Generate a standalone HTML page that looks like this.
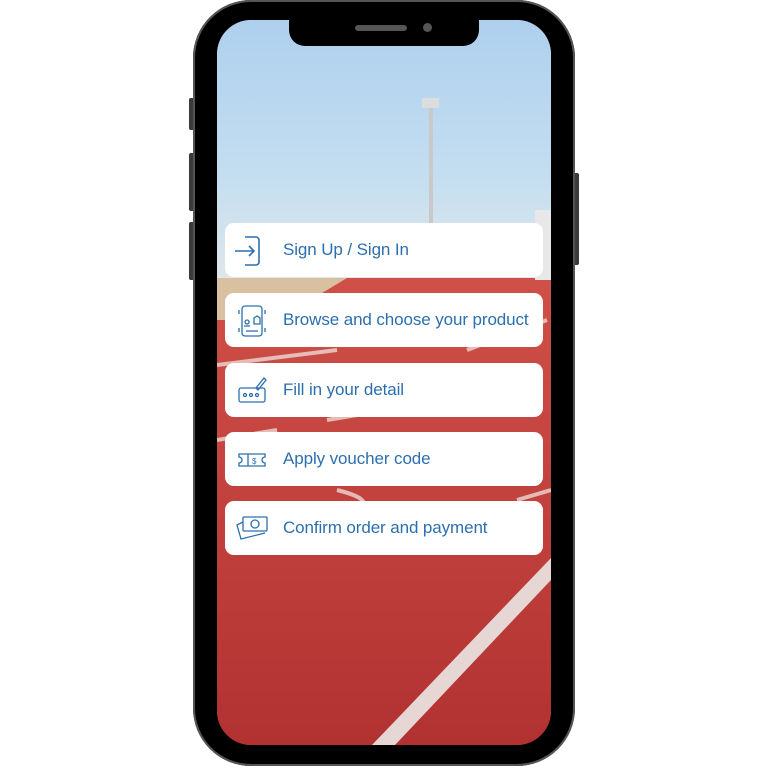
<!DOCTYPE html>
<html><head><style>
html,body{margin:0;padding:0;background:#fff;width:768px;height:768px;overflow:hidden;position:relative;font-family:"Liberation Sans",sans-serif}
.btn{position:absolute;background:#3a3a3a;border-radius:2px}
.body{position:absolute;left:193px;top:0;width:382px;height:766px;background:#000;border-radius:58px;box-shadow:0 0 0 2px #555 inset}
.screen{position:absolute;left:217px;top:20px;width:334px;height:725px;border-radius:34px;overflow:hidden;background:#b83b36}
.notch{position:absolute;left:289px;top:18px;width:190px;height:28px;background:#000;border-radius:0 0 16px 16px}
.card{position:absolute;left:225px;width:318px;height:54px;background:#fff;border-radius:9px;color:#2c6fae;font-size:17px;line-height:54px}
.card span{position:absolute;left:58px;top:0;white-space:nowrap;letter-spacing:-0.1px}
.card svg{position:absolute;left:10px;top:11px}
</style></head><body>
<div class="btn" style="left:189px;top:98px;width:6px;height:32px"></div>
<div class="btn" style="left:189px;top:153px;width:6px;height:58px"></div>
<div class="btn" style="left:189px;top:222px;width:6px;height:58px"></div>
<div class="btn" style="left:573px;top:173px;width:6px;height:92px"></div>
<div class="body"></div>
<div class="screen">
<svg width="334" height="725" style="position:absolute;left:0;top:0">
<defs><linearGradient id="sky" x1="0" y1="0" x2="0" y2="1"><stop offset="0" stop-color="#aed0ee"/><stop offset="0.6" stop-color="#c4def0"/><stop offset="1" stop-color="#dfe7ea"/></linearGradient>
<linearGradient id="red" x1="0" y1="0" x2="0" y2="1"><stop offset="0" stop-color="#cf5048"/><stop offset="1" stop-color="#b23232"/></linearGradient></defs>
<rect width="334" height="262" fill="url(#sky)"/>
<rect y="258" width="334" height="467" fill="url(#red)"/>
<polygon points="0,258 130,258 60,300 0,300" fill="#d8c0a0"/>
<rect x="212" y="85" width="4" height="120" fill="#c9c9c9"/>
<rect x="205" y="78" width="17" height="10" fill="#ddd"/>
<rect x="318" y="190" width="16" height="70" fill="#e8e8e8"/>
<polygon points="334,538 334,560 178,725 155,725" fill="#e6d6d4"/>
<path d="M0,345 L120,330 M110,400 L200,385 M0,420 L60,410 M250,330 L330,300 M300,480 L334,470 M120,470 Q160,480 140,490" stroke="#eed8d4" stroke-width="4" fill="none" opacity="0.8"/>
</svg>
</div>
<div class="notch"><div style="position:absolute;left:66px;top:7px;width:52px;height:6px;border-radius:3px;background:#555"></div><div style="position:absolute;left:134px;top:5px;width:9px;height:9px;border-radius:5px;background:#555"></div></div>

<div class="card" style="top:223px"><svg width="34" height="34" fill="none" stroke="#2c6fae" stroke-width="1.6"><path d="M10 3h11a3 3 0 0 1 3 3v22a3 3 0 0 1-3 3H10M0 17h19M14 12l5 5-5 5"/></svg><span>Sign Up / Sign In</span></div>
<div class="card" style="top:293px"><svg width="34" height="34" fill="none" stroke="#2c6fae" stroke-width="1.3"><rect x="7" y="2" width="20" height="30" rx="3"/><path d="M4 6v4M4 24v4M30 6v4M30 24v4M11 27h12M12 16a2 2 0 1 0 0.1 0M9 22h6M19 14l3-2 3 2v6h-6z"/></svg><span>Browse and choose your product</span></div>
<div class="card" style="top:363px"><svg width="34" height="34" fill="none" stroke="#2c6fae" stroke-width="1.3"><rect x="4" y="14" width="26" height="14" rx="2"/><circle cx="10" cy="21" r="1.5"/><circle cx="16" cy="21" r="1.5"/><circle cx="22" cy="21" r="1.5"/><path d="M21 14l8-10 2 2-8 10z"/></svg><span>Fill in your detail</span></div>
<div class="card" style="top:432px"><svg width="34" height="34" fill="none" stroke="#2c6fae" stroke-width="1.3"><path d="M4 11h26v3a3 3 0 0 0 0 6v3H4v-3a3 3 0 0 0 0-6z M13 11v12"/><text x="17" y="21" font-size="8" fill="#2c6fae" stroke="none" font-family="Liberation Sans">$</text></svg><span>Apply voucher code</span></div>
<div class="card" style="top:501px"><svg width="34" height="34" fill="none" stroke="#2c6fae" stroke-width="1.3"><rect x="8" y="5" width="24" height="14" rx="1"/><circle cx="20" cy="12" r="4"/><path d="M8 10l-6 3 4 14 24-6"/></svg><span>Confirm order and payment</span></div>
</body></html>
